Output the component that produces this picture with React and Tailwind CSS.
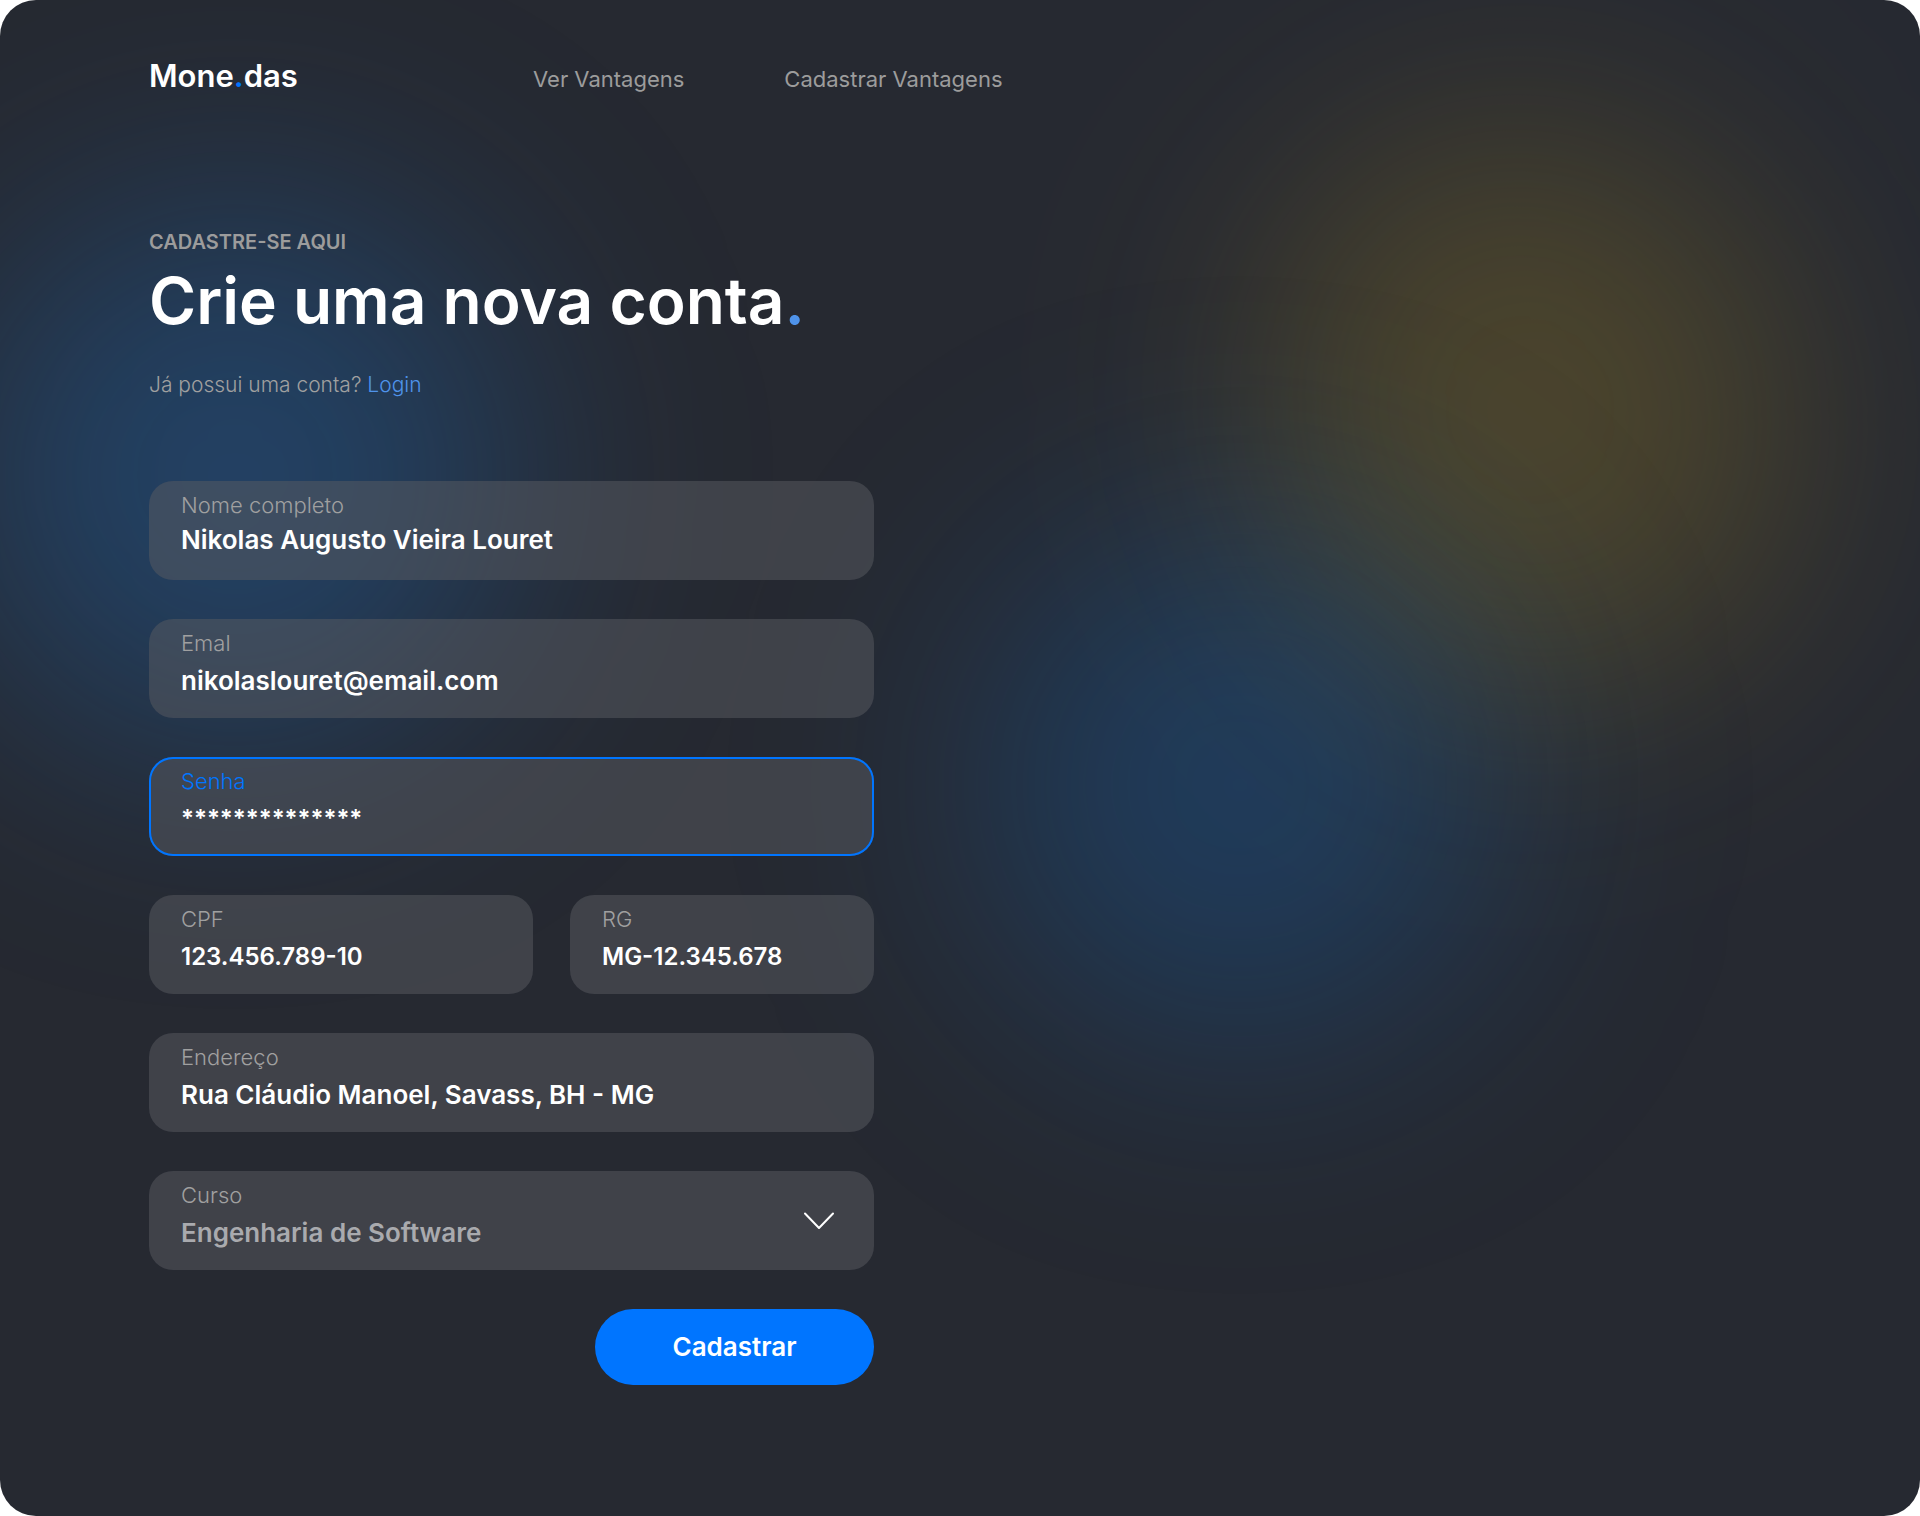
import { useState } from "react";

const FIELD = "flex h-[99px] flex-col rounded-3xl bg-[#5a5b61]/50 px-8 pt-3";
const LABEL = "text-[22px] leading-6 font-light";
const VALUE = "w-full bg-transparent leading-8 font-semibold outline-none";

function Field({ id, label, value, type = "text", active = false, tight = false, numeric = false, className = "" }) {
  const [text, setText] = useState(value);
  return (
    <div
      className={`${FIELD} ${tight ? "gap-[7px]" : "gap-2.5"} ${
        active ? "inset-ring-2 inset-ring-[#0075ff]" : ""
      } ${className}`}
    >
      <label htmlFor={id} className={`${LABEL} ${active ? "text-[#0075ff]" : "text-[#a0a0a0]"}`}>
        {label}
      </label>
      <input
        id={id}
        name={id}
        type={type}
        value={text}
        onChange={(e) => setText(e.target.value)}
        className={`${VALUE} ${numeric ? "text-2xl leading-8" : "text-[26px]"} text-white`}
      />
    </div>
  );
}

function Glow() {
  return (
    <div aria-hidden="true" className="pointer-events-none absolute inset-0 -z-10">
      <div className="absolute top-[195px] left-[-45px] size-[560px] rounded-full bg-[#1a80e8]/28 blur-[125px]" />
      <div className="absolute top-[120px] left-[1270px] h-[580px] w-[520px] rotate-[-20deg] rounded-full bg-[#b49420]/26 blur-[120px]" />
      <div className="absolute top-[525px] left-[980px] size-[520px] rounded-full bg-[#0a78e4]/24 blur-[125px]" />
    </div>
  );
}

export default function App() {
  return (
    <div className="bg-white font-['Inter','Open_Sans',sans-serif]">
      <div className="relative isolate min-h-screen overflow-hidden rounded-[36px] bg-[#262931] px-[149px] pt-14 pb-[130px]">
        <Glow />

        <header className="flex items-baseline">
          <a href="#" className="w-[384px] text-[31px] leading-10 font-semibold text-white">
            Mone<span className="text-[#0075ff]">.</span>das
          </a>
          <nav className="flex gap-[100px] text-[22px] leading-6 text-[#9c9c9c]">
            <a href="#vantagens">Ver Vantagens</a>
            <a href="#cadastrar-vantagens">Cadastrar Vantagens</a>
          </nav>
        </header>

        <main className="mt-[134px] max-w-[725px]">
          <p className="text-xl leading-6 font-semibold text-[#9c9c9c]">CADASTRE-SE AQUI</p>
          <h1 className="mt-[11px] text-[64px] leading-[72px] font-semibold text-white">
            Crie uma nova conta<span className="text-[#4f93ea]">.</span>
          </h1>
          <p className="mt-[34px] text-[21px] leading-7 font-light text-[#a0a0a0]">
            Já possui uma conta?{" "}
            <a href="#login" className="text-[#4f93ea]">
              Login
            </a>
          </p>

          <form className="mt-[82px] flex flex-col gap-[39px]" onSubmit={(e) => e.preventDefault()}>
            <Field id="nome" label="Nome completo" value="Nikolas Augusto Vieira Louret" tight />
            <Field id="email" label="Emal" value="nikolaslouret@email.com" type="email" />
            <Field id="senha" label="Senha" value="**************" active numeric />
            <div className="flex gap-[37px]">
              <Field id="cpf" label="CPF" value="123.456.789-10" numeric className="w-[384px]" />
              <Field id="rg" label="RG" value="MG-12.345.678" numeric className="min-w-0 flex-1" />
            </div>
            <Field id="endereco" label="Endereço" value="Rua Cláudio Manoel, Savass, BH - MG" />
            <div className={`${FIELD} relative gap-2.5`}>
              <label htmlFor="curso" className={`${LABEL} text-[#a0a0a0]`}>
                Curso
              </label>
              <select id="curso" name="curso" className={`${VALUE} appearance-none text-[26px] text-[#a9aaae]`}>
                <option>Engenharia de Software</option>
              </select>
              <svg
                aria-hidden="true"
                viewBox="0 0 30 17"
                className="pointer-events-none absolute top-[41px] right-10 h-[17px] w-[30px]"
                fill="none"
                stroke="white"
                strokeWidth="2"
                strokeLinecap="round"
                strokeLinejoin="round"
              >
                <path d="M1 1.5 15 16 29 1.5" />
              </svg>
            </div>
            <button
              type="submit"
              className="h-[76px] w-[279px] self-end rounded-full bg-[#0075ff] text-[26px] leading-8 font-semibold text-white"
            >
              Cadastrar
            </button>
          </form>
        </main>
      </div>
    </div>
  );
}
